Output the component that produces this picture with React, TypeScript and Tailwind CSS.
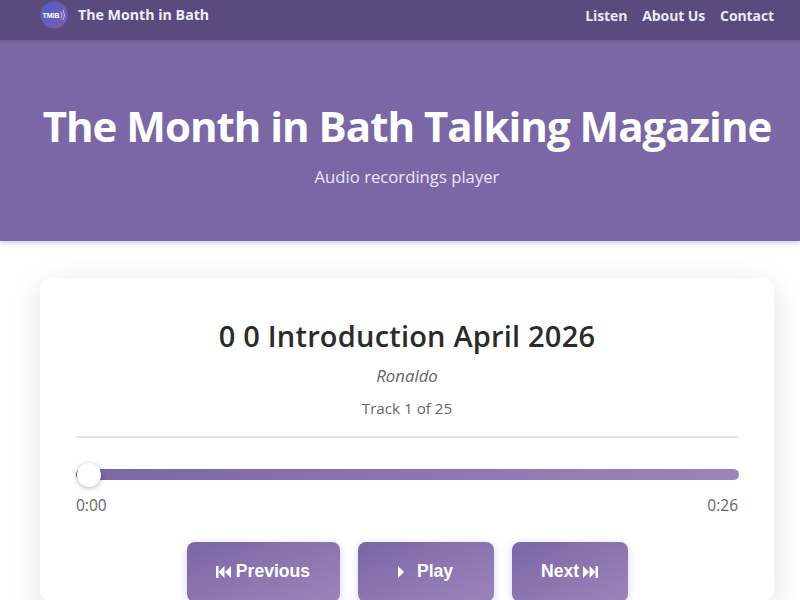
const btn = "flex h-[60px] items-center justify-center rounded-lg bg-gradient-to-br from-[#7b66a6] to-[#9b85ba] pb-[1px] shadow-[0_2px_8px_rgba(123,102,230,0.3)]"

const App = () => {
  return (
    <div className="h-[600px] overflow-hidden bg-white font-['Open_Sans',sans-serif]">
      <header className="relative z-10 flex h-10 items-center justify-between bg-[#5b4a7e] pl-10 pr-[26px] shadow-[0_2px_4px_rgba(0,0,0,0.1)]">
        <div className="flex items-center gap-2.5 pb-[10px]">
          <svg width="28" height="28" viewBox="0 0 28 28">
            <defs>
              <linearGradient id="logo" x1="0" y1="0" x2="1" y2="1">
                <stop offset="0" stopColor="#4f5fc4" />
                <stop offset="1" stopColor="#7a5fb0" />
              </linearGradient>
            </defs>
            <circle cx="14" cy="14" r="13.5" fill="url(#logo)" />
            <text x="11" y="16.5" textAnchor="middle" fontSize="7" fontWeight="700" fill="#fff" fontFamily="Liberation Sans, sans-serif">TMIB</text>
            <path d="M21 10.5q2 3.5 0 7M23 9q3 5 0 10" fill="none" stroke="#d9d4f0" strokeWidth="0.8" />
          </svg>
          <span className="text-[14.2px] font-bold text-[#f1eef8]">The Month in Bath</span>
        </div>
        <nav className="flex gap-[15px] pb-[9px] text-[14px] font-bold tracking-[-0.1px] text-[#ece8f5]">
          <a>Listen</a>
          <a>About Us</a>
          <a>Contact</a>
        </nav>
      </header>
      <section className="h-[201px] bg-[#7b66a6] pl-10 pr-[26px] pt-[54px] text-center text-white shadow-[0_2px_6px_rgba(91,74,126,0.3)]">
        <h1 className="text-[42px] leading-[64px] font-bold tracking-[-1px] whitespace-nowrap">The Month in Bath Talking Magazine</h1>
        <p className="mt-[6px] text-[16.7px] leading-[26px] text-[#ebe6f5]">Audio recordings player</p>
      </section>
      <main className="ml-10 mt-[37px] w-[734px] rounded-xl bg-white px-9 pt-[36px] shadow-[0_8px_32px_rgba(0,0,0,0.12)]">
        <h2 className="text-center text-[29px] leading-[44px] font-semibold tracking-[0.2px] text-[#2b2b2b]">0 0 Introduction April 2026</h2>
        <p className="mt-[6px] text-center text-[16.8px] leading-[24px] text-[#666] italic">Ronaldo</p>
        <p className="mt-[8px] text-center text-[15.2px] leading-[24px] text-[#666]">Track 1 of 25</p>
        <hr className="mt-4 border-t-2 border-[#e5e5e5]" />
        <div className="relative mt-[31px] h-[11px] w-[663px] rounded-md bg-gradient-to-r from-[#7b66a6] to-[#9b85ba]">
          <div className="absolute -top-[6px] left-[1px] h-[24px] w-[24px] rounded-full bg-white shadow-[0_1px_5px_rgba(0,0,0,0.3)]" />
        </div>
        <div className="mt-[13px] flex justify-between text-[15.5px] leading-[24px] text-[#666]">
          <span>0:00</span>
          <span>0:26</span>
        </div>
        <div className="mt-[25px] flex justify-center gap-[18px] font-['Liberation_Sans',sans-serif] text-[17.6px] font-bold text-white">
          <button className={`${btn} w-[153px] gap-[5px]`}>
            <svg width="15" height="12" viewBox="0 0 15 12" fill="currentColor">
              <path d="M0 0h2.5v12H0zM8.5 0v12L2.5 6zM15 0v12L9 6z" />
            </svg>
            Previous
          </button>
          <button className={`${btn} w-[136px] gap-[13px]`}>
            <svg width="6" height="12" viewBox="0 0 6 12" fill="currentColor">
              <path d="M0 0l6 6-6 6z" />
            </svg>
            Play
          </button>
          <button className={`${btn} w-[116px] gap-[4px]`}>
            Next
            <svg width="15" height="12" viewBox="0 0 15 12" fill="currentColor">
              <path d="M15 0h-2.500v12H15zM6.500 0v12l6-6zM0 0v12l6-6z" />
            </svg>
          </button>
        </div>
      </main>
    </div>
  )
}

export default App
